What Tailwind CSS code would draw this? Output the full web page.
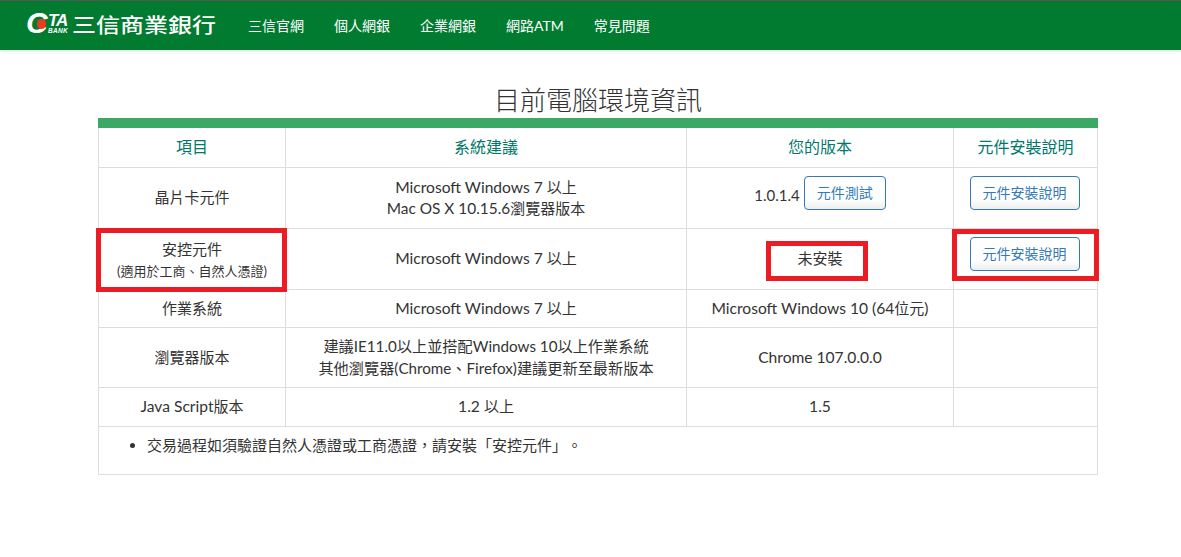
<!DOCTYPE html>
<html lang="zh-Hant">
<head>
    <meta charset="UTF-8">
    <title>目前電腦環境資訊</title>
    <script src="https://cdn.jsdelivr.net/npm/@tailwindcss/browser@4"></script>
</head>
<body class="bg-white text-[#333] text-[15px] font-['Lato','Noto_Sans_CJK_TC',sans-serif]">
    <nav class="h-[50px] bg-[#007b30] border-t border-[#555] shadow-[0_1px_3px_rgba(0,0,0,0.15)] flex items-center pl-[28px] text-white">
        <div class="relative w-[44px] h-[28px] shrink-0">
            <span class="absolute left-[-2px] top-0 text-[30px] leading-[22px] font-bold italic font-['Liberation_Sans',sans-serif]">C</span>
            <span class="absolute left-[9px] top-[7px] w-[9px] h-[10px] rounded-full bg-[#ee3a1c]"></span>
            <span class="absolute left-[20px] top-[3px] text-[17px] leading-[12px] font-bold italic tracking-[-1px] font-['Liberation_Sans',sans-serif]">TA</span>
            <span class="absolute left-[20px] top-[16px] text-[6.5px] leading-[5px] font-bold italic tracking-[0.3px] font-['Liberation_Sans',sans-serif]">BANK</span>
        </div>
        <span class="text-[24px] leading-none font-medium w-[176px] shrink-0 font-['Noto_Sans_CJK_TC',sans-serif] mt-[-4px] scale-y-[0.85] origin-left">三信商業銀行</span>
        <ul class="flex gap-[30px] text-[14px]">
            <li>三信官網</li>
            <li>個人網銀</li>
            <li>企業網銀</li>
            <li>網路ATM</li>
            <li>常見問題</li>
        </ul>
    </nav>

    <main class="relative w-[1000px] ml-[98px]">
        <h1 class="text-[26px] leading-[37px] text-center pt-[32px] h-[68px] font-light text-[#333]">目前電腦環境資訊</h1>
        <div class="h-[10px] bg-[#3ca866]"></div>
        <table class="w-full table-fixed border-collapse text-center text-[15.6px]">
            <colgroup>
                <col class="w-[187px]">
                <col class="w-[401px]">
                <col class="w-[267px]">
                <col>
            </colgroup>
            <tr class="h-[39px] text-[#00796b] text-[16px]">
                <th class="font-normal border border-[#ddd] border-t-0">項目</th>
                <th class="font-normal border border-[#ddd] border-t-0">系統建議</th>
                <th class="font-normal border border-[#ddd] border-t-0">您的版本</th>
                <th class="font-normal border border-[#ddd] border-t-0">元件安裝說明</th>
            </tr>
            <tr class="h-[61px]">
                <td class="border border-[#ddd] text-[15px]">晶片卡元件</td>
                <td class="border border-[#ddd] leading-[21px]">Microsoft Windows 7 <span class="text-[15px]">以上</span><br><span class="text-[15.4px]">Mac OS X 10.15.6</span><span class="text-[15px]">瀏覽器版本</span></td>
                <td class="border border-[#ddd]">
                    <span class="inline-flex items-center gap-[4px] mb-[10px]"><span class="mt-[5px] text-[15px]">1.0.1.4</span>
                        <button class="h-[34px] w-[82px] rounded-[4px] border border-[#337ab7] bg-linear-to-b from-white from-70% to-[#eee] text-[#337ab7] text-[14px]">元件測試</button>
                    </span>
                </td>
                <td class="border border-[#ddd]">
                    <button class="h-[34px] w-[110px] mr-[2px] mb-[10px] rounded-[4px] border border-[#337ab7] bg-linear-to-b from-white from-70% to-[#eee] text-[#337ab7] text-[14px]">元件安裝說明</button>
                </td>
            </tr>
            <tr class="h-[61px]">
                <td class="border border-[#ddd] text-[15px] leading-[21px] pt-[3px]">安控元件<br><span class="text-[13px]">(適用於工商、自然人憑證)</span></td>
                <td class="border border-[#ddd]">Microsoft Windows 7 <span class="text-[15px]">以上</span></td>
                <td class="border border-[#ddd] text-[15px]">未安裝</td>
                <td class="border border-[#ddd]">
                    <button class="h-[34px] w-[110px] mr-[2px] mb-[10px] rounded-[4px] border border-[#337ab7] bg-linear-to-b from-white from-70% to-[#eee] text-[#337ab7] text-[14px]">元件安裝說明</button>
                </td>
            </tr>
            <tr class="h-[38px]">
                <td class="border border-[#ddd] text-[15px]">作業系統</td>
                <td class="border border-[#ddd] pt-[2px]">Microsoft Windows 7 <span class="text-[15px]">以上</span></td>
                <td class="border border-[#ddd] pt-[2px]">Microsoft Windows 10 (64<span class="text-[15px]">位元</span>)</td>
                <td class="border border-[#ddd]"></td>
            </tr>
            <tr class="h-[60px]">
                <td class="border border-[#ddd] text-[15px]">瀏覽器版本</td>
                <td class="border border-[#ddd] leading-[22px] text-[15.2px]">建議IE11.0以上並搭配Windows 10以上作業系統<br>其他瀏覽器(Chrome、Firefox)建議更新至最新版本</td>
                <td class="border border-[#ddd] pt-[2px]">Chrome 107.0.0.0</td>
                <td class="border border-[#ddd]"></td>
            </tr>
            <tr class="h-[39px]">
                <td class="border border-[#ddd]">Java Script<span class="text-[15px]">版本</span></td>
                <td class="border border-[#ddd]">1.2 <span class="text-[15px]">以上</span></td>
                <td class="border border-[#ddd]">1.5</td>
                <td class="border border-[#ddd]"></td>
            </tr>
            <tr class="h-[48px]">
                <td colspan="4" class="border border-[#ddd] text-left align-top pt-[7px] pl-[48px] text-[15px] [text-spacing-trim:space-all]">
                    <ul class="list-disc"><li>交易過程如須驗證自然人憑證或工商憑證，請安裝「安控元件」。</li></ul>
                </td>
            </tr>
        </table>

        <!-- red highlight boxes sit over the table -->
        <div class="absolute left-[-2px] top-[178px] w-[191px] h-[64px] border-[5px] border-[#ed1c24]"></div>
        <div class="absolute left-[668px] top-[191px] w-[102px] h-[40px] border-[5px] border-[#ed1c24]"></div>
        <div class="absolute left-[854px] top-[179px] w-[147px] h-[52px] border-[5px] border-[#ed1c24]"></div>
    </main>
</body>
</html>
